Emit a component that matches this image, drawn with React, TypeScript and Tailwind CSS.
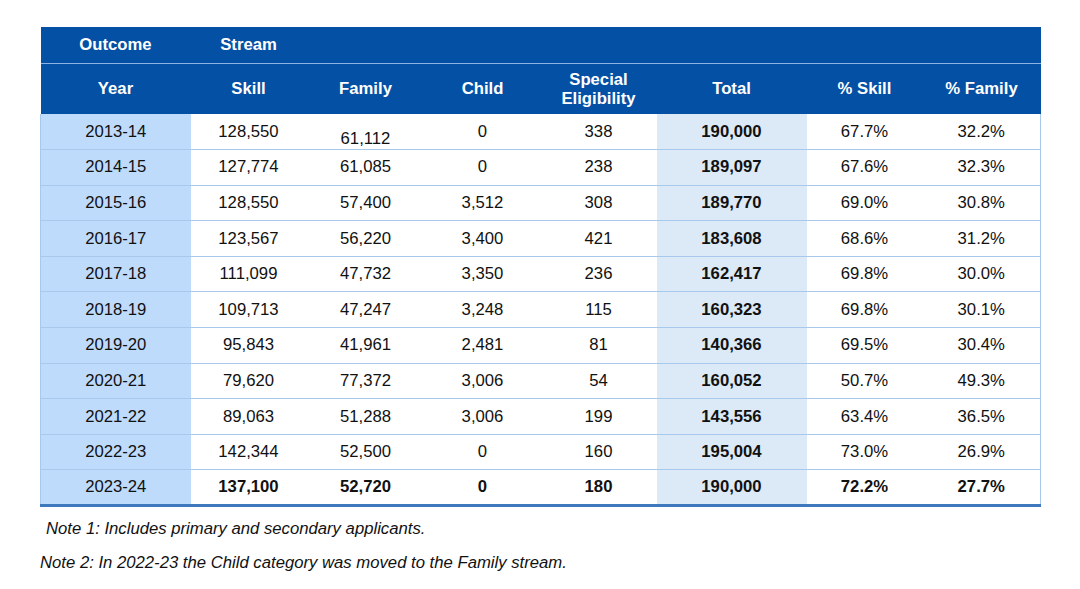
const rows: string[][] = [
  ["2013-14", "128,550", "61,112", "0", "338", "190,000", "67.7%", "32.2%"],
  ["2014-15", "127,774", "61,085", "0", "238", "189,097", "67.6%", "32.3%"],
  ["2015-16", "128,550", "57,400", "3,512", "308", "189,770", "69.0%", "30.8%"],
  ["2016-17", "123,567", "56,220", "3,400", "421", "183,608", "68.6%", "31.2%"],
  ["2017-18", "111,099", "47,732", "3,350", "236", "162,417", "69.8%", "30.0%"],
  ["2018-19", "109,713", "47,247", "3,248", "115", "160,323", "69.8%", "30.1%"],
  ["2019-20", "95,843", "41,961", "2,481", "81", "140,366", "69.5%", "30.4%"],
  ["2020-21", "79,620", "77,372", "3,006", "54", "160,052", "50.7%", "49.3%"],
  ["2021-22", "89,063", "51,288", "3,006", "199", "143,556", "63.4%", "36.5%"],
  ["2022-23", "142,344", "52,500", "0", "160", "195,004", "73.0%", "26.9%"],
  ["2023-24", "137,100", "52,720", "0", "180", "190,000", "72.2%", "27.7%"],
];

const widths = ["w-[150px]", "w-[116px]", "w-[118px]", "w-[116px]", "w-[116px]", "w-[150px]", "w-[116px]", "w-[118px]"];

export default function App() {
  return (
    <div className="w-[1080px] h-[589px] bg-white pt-[27px] pl-[40px] font-['Liberation_Sans',Arial,sans-serif] text-[16.7px] leading-[20px] text-[#111]">
      <table className="w-[1000px] table-fixed border-collapse border-b-[3px] border-b-[#3f79bd]">
        <colgroup>
          {widths.map((w, i) => (
            <col key={i} className={w} />
          ))}
        </colgroup>
        <thead className="bg-[#0450a4] text-white font-bold">
          <tr className="h-[36px] border-b border-b-[#8db3e2]">
            <th className="font-bold">Outcome</th>
            <th className="font-bold">Stream</th>
            <th colSpan={6}></th>
          </tr>
          <tr className="h-[51px]">
            <th className="font-bold">Year</th>
            <th className="font-bold">Skill</th>
            <th className="font-bold">Family</th>
            <th className="font-bold">Child</th>
            <th className="font-bold leading-[19px]">
              Special
              <br />
              Eligibility
            </th>
            <th className="font-bold">Total</th>
            <th className="font-bold">% Skill</th>
            <th className="font-bold">% Family</th>
          </tr>
        </thead>
        <tbody>
          {rows.map((r, ri) => {
            const last = ri === rows.length - 1;
            return (
              <tr key={r[0]} className="h-[35.6px] border-b border-b-[#a9c9ec]">
                {r.map((c, ci) => (
                  <td
                    key={ci}
                    className={`text-center p-0 ${ci === 0 ? "bg-[#bfdbfb] border-l border-l-[#a9c9ec]" : ""} ${ci === 5 ? "bg-[#dce9f6] font-bold" : ""} ${ci === 7 ? "border-r border-r-[#a9c9ec]" : ""} ${last && ci > 0 ? "font-bold" : ""} ${ri === 0 && ci === 2 ? "pt-[14px]" : ""}`}
                  >
                    {c}
                  </td>
                ))}
              </tr>
            );
          })}
        </tbody>
      </table>
      <p className="italic mt-[12px] ml-[6px]">Note 1: Includes primary and secondary applicants.</p>
      <p className="italic mt-[14px]">Note 2: In 2022-23 the Child category was moved to the Family stream.</p>
    </div>
  );
}
